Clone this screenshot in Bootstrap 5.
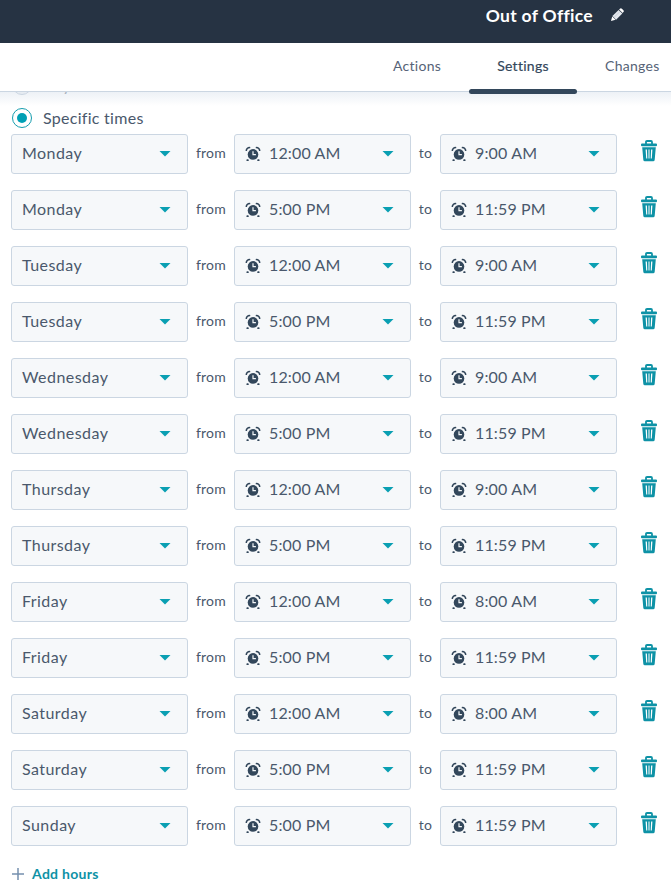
<!DOCTYPE html>
<html lang="en">
<head>
<meta charset="utf-8">
<meta name="viewport" content="width=device-width, initial-scale=1">
<title>Out of Office</title>
<link href="https://cdn.jsdelivr.net/npm/bootstrap@5.3.0/dist/css/bootstrap.min.css" rel="stylesheet">
<style>
  body { font-family: Lato, "Liberation Sans", sans-serif; color: #4a586c; font-size: 16px; line-height: 24px; height: 887px; overflow: hidden; background: #fff; }
  .title-bar { height: 43px; background: #263343; color: #fff; padding: 0 46px 12px 0; }
  .title-bar h1 { font-size: 17.5px; font-weight: 700; line-height: 24px; letter-spacing: .3px; }
  .tabs { height: 49px; border-bottom: 1px solid #cbd6e2; padding-left: 365px; font-size: 14px; letter-spacing: .28px; }
  .tabs a { color: #566377; text-decoration: none; padding: 11px 28px 0; white-space: nowrap; flex: none; }
  .tabs a:first-child { width: 104px; }
  .tabs .current { color: #33475b; width: 108px; padding: 11px 0 0; text-align: center; position: relative; -webkit-text-stroke: .2px; }
  .tabs .current::after { content: ""; position: absolute; left: 0; right: 0; top: 46px; height: 5px; border-radius: 3px; background: #33475b; z-index: 2; }
  .scroll-edge { height: 14px; background: linear-gradient(#edf1f6, #fff); overflow: hidden; position: relative; }
  .scroll-edge::before { content: ""; position: absolute; left: 12px; top: -17px; width: 20px; height: 20px; border-radius: 50%; border: 1px solid #cbd6e2; background: #e7ecf2; }
  .scroll-edge span { position: absolute; left: 43px; top: -19px; color: #a9b3c1; }
  .choice { height: 28px; padding-left: 12px; gap: 11px; letter-spacing: .28px; }
  .dot { width: 20px; height: 20px; border: 1px solid #159dae; }
  .dot::before { content: ""; width: 10px; height: 10px; border-radius: 50%; background: #00a0b5; }
  .hours { padding-left: 11px; gap: 16px; }
  .slot { height: 40px; }
  .picker { width: 177px; height: 40px; border: 1px solid #cbd6e2; border-radius: 3px; background: #f6f8fa; padding: 0 16px 1px 10px; letter-spacing: .15px; }
  .picker span { padding-bottom: 2px; }
  .day { letter-spacing: .45px; }
  .caret { width: 12px; height: 6px; background: #0a9fb2; clip-path: polygon(0 0, 100% 0, 50% 100%); }
  .joiner { font-size: 14px; padding-bottom: 2px; letter-spacing: .2px; }
  .from { width: 46px; }
  .to { width: 29px; }
  .bin { width: 16px; height: 22px; margin: 0 0 6px 24px; color: #0e92a6; }
  .add { padding: 16px 0 0 12px; gap: 8px; font-size: 14px; font-weight: 700; color: #0e92a6; letter-spacing: .3px; }
</style>
<script src="https://cdn.jsdelivr.net/npm/bootstrap@5.3.0/dist/js/bootstrap.bundle.min.js"></script>
</head>
<body>
<svg class="d-none">
  <symbol id="clock" viewBox="0 0 16 16">
    <circle cx="8" cy="8.4" r="5.3" fill="#33475b"/>
    <path d="M1.3 5A3.2 3.2 0 0 1 5.2 1.7M10.8 1.7a3.2 3.2 0 0 1 3.9 3.3" fill="none" stroke="#33475b" stroke-width="1.5"/>
    <path d="M2.3 14.2h.6M13.7 14.2h-.6" stroke="#33475b" stroke-width="1.8" stroke-linecap="round"/>
    <path d="M8 5.2v3.5h2.9" fill="none" stroke="#f5f8fa" stroke-width="1.2"/>
  </symbol>
  <symbol id="trash" viewBox="0 0 16 22">
    <path d="M5 4V1.9Q5 1 6 1h4q1 0 1 .9V4" fill="none" stroke="currentColor" stroke-width="1.8"/>
    <rect x="0" y="3.6" width="16" height="2.7" rx="1" fill="currentColor"/>
    <path fill="currentColor" fill-rule="evenodd" d="M1.2 7.2h13.6l-1.1 12.5q-.1 1.5-1.6 1.5H3.9q-1.5 0-1.6-1.5zM4.6 9.6l.6 8.8h1.1l-.4-8.8zM7.5 9.6v8.8h1V9.6zM10.1 9.6l-.4 8.8h1.1l.6-8.8z"/>
  </symbol>
</svg>
<header class="title-bar d-flex align-items-center justify-content-end">
  <h1 class="m-0">Out of Office</h1>
  <svg width="15" height="14" viewBox="0 0 15 14" style="margin:0 0 2px 17px">
    <path d="M1 13l1.2-4.6 3.4 3.4z" fill="#fff"/>
    <path d="M2.4 8.1l6.2-6.2 3.7 3.7-6.2 6.2z" fill="#e4e8ee"/>
    <path d="M9.1 1.4l.8-.7q1-.8 2 0l1.5 1.5q.9.9 0 1.9l-.7.8z" fill="#fff"/>
    <path d="M4.1 9.3l5.7-5.6" stroke="#b4bdc9" stroke-width=".6"/>
  </svg>
</header>
<nav class="tabs d-flex">
  <a href="#">Actions</a><a href="#" class="current">Settings</a><a href="#">Changes</a>
</nav>
<main>
  <div class="scroll-edge"><span>Any</span></div>
  <label class="choice d-flex align-items-center pb-1"><span class="dot rounded-circle d-flex align-items-center justify-content-center"></span>Specific times</label>
  <div class="hours d-flex flex-column" id="hours"></div>
  <div class="add d-flex align-items-center">
    <svg width="12" height="12" viewBox="0 0 12 12"><path d="M6 0v12M0 6h12" stroke="#7590ae" stroke-width="1.5"/></svg>Add hours
  </div>
</main>
<script>
  const slots = [
    ["Monday", "12:00 AM", "9:00 AM"], ["Monday", "5:00 PM", "11:59 PM"],
    ["Tuesday", "12:00 AM", "9:00 AM"], ["Tuesday", "5:00 PM", "11:59 PM"],
    ["Wednesday", "12:00 AM", "9:00 AM"], ["Wednesday", "5:00 PM", "11:59 PM"],
    ["Thursday", "12:00 AM", "9:00 AM"], ["Thursday", "5:00 PM", "11:59 PM"],
    ["Friday", "12:00 AM", "8:00 AM"], ["Friday", "5:00 PM", "11:59 PM"],
    ["Saturday", "12:00 AM", "8:00 AM"], ["Saturday", "5:00 PM", "11:59 PM"],
    ["Sunday", "5:00 PM", "11:59 PM"]
  ];
  const time = t => `<div class="picker d-flex align-items-center"><svg class="me-2" width="16" height="16"><use href="#clock"/></svg><span>${t}</span><i class="caret ms-auto"></i></div>`;
  document.getElementById("hours").innerHTML = slots.map(([day, start, end]) => `
    <div class="slot d-flex align-items-center">
      <div class="picker day d-flex align-items-center"><span>${day}</span><i class="caret ms-auto"></i></div>
      <span class="joiner from text-center">from</span>${time(start)}
      <span class="joiner to text-center">to</span>${time(end)}
      <svg class="bin"><use href="#trash"/></svg>
    </div>`).join("");
</script>
</body>
</html>
